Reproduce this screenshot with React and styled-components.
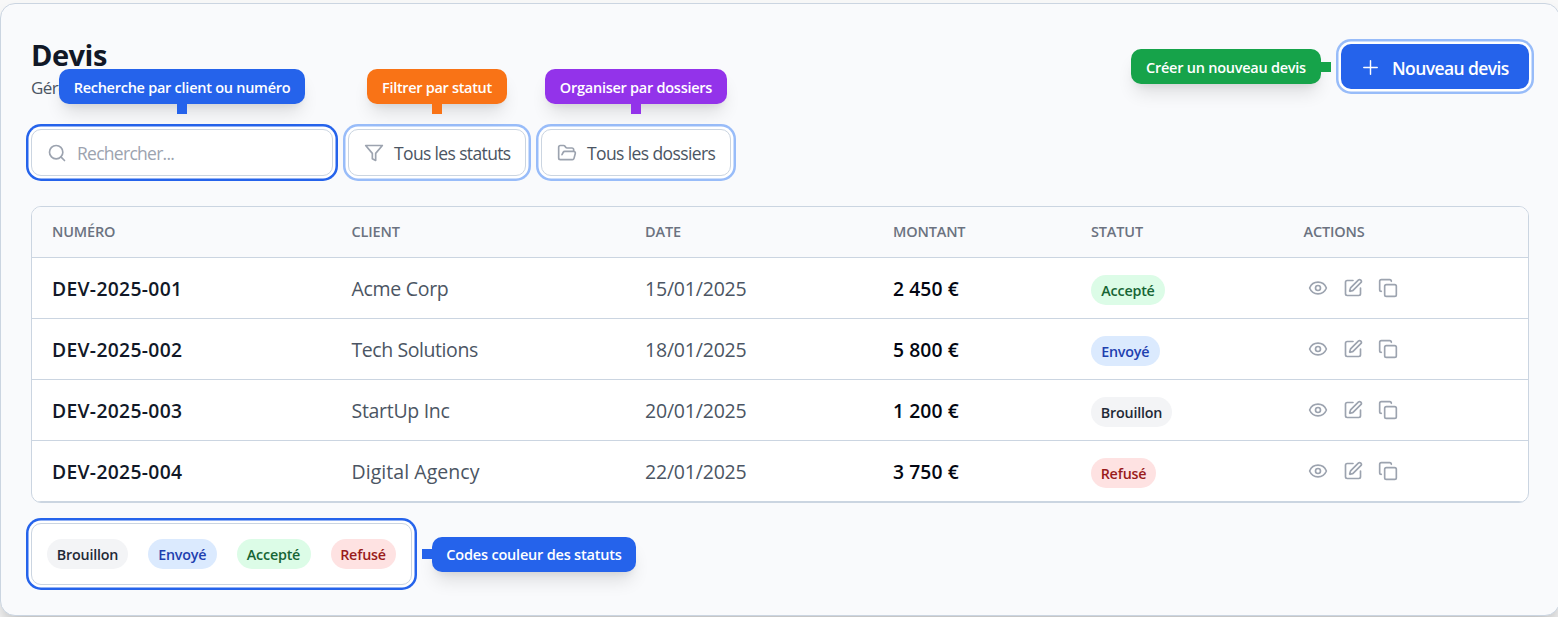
import React from "react";
import styled, { createGlobalStyle, css } from "styled-components";
import { Search, FolderOpen, Plus, Eye, SquarePen, Copy } from "lucide-react";

const statuses = {
    draft: { label: "Brouillon", bg: "#f3f4f6", color: "#1f2937", width: 81 },
    sent: { label: "Envoyé", bg: "#dbeafe", color: "#1e40af", width: 68.5 },
    accepted: { label: "Accepté", bg: "#dcfce7", color: "#166534", width: 74 },
    refused: { label: "Refusé", bg: "#fee2e2", color: "#991b1b", width: 65 },
};

const quotes = [
    { id: "DEV-2025-001", client: "Acme Corp", date: "15/01/2025", amount: "2 450 €", status: "accepted" },
    { id: "DEV-2025-002", client: "Tech Solutions", date: "18/01/2025", amount: "5 800 €", status: "sent", spacing: "-0.42px" },
    { id: "DEV-2025-003", client: "StartUp Inc", date: "20/01/2025", amount: "1 200 €", status: "draft" },
    { id: "DEV-2025-004", client: "Digital Agency", date: "22/01/2025", amount: "3 750 €", status: "refused", spacing: "0.05px" },
];

const columns = ["Numéro", "Client", "Date", "Montant", "Statut", "Actions"];

const FilterIcon = () => (
    <svg
        width="20"
        height="20"
        viewBox="0 0 24 24"
        fill="none"
        stroke="currentColor"
        strokeWidth="2"
        strokeLinecap="round"
        strokeLinejoin="round"
    >
        <polygon points="22 3 2 3 10 12.46 10 19 14 21 14 12.46 22 3" />
    </svg>
);

const StatusBadge = ({ status }) => {
    const { label, bg, color, width } = statuses[status];
    return (
        <Badge $bg={bg} $color={color} $width={width}>
            {label}
        </Badge>
    );
};

const App = () => {
    return (
        <>
            <GlobalStyle />
            <Card>
                <Header>
                    <div>
                        <Title>Devis</Title>
                        <Subtitle>Gérez vos devis</Subtitle>
                    </div>
                    <Anchor>
                        <NewButton>
                            <Plus size={23} strokeWidth={1.5} />
                            <span>Nouveau devis</span>
                        </NewButton>
                        <SideTip $color="#16a34a" $side="left" $width={190} $spacing="-0.25px">
                            Créer un nouveau devis
                        </SideTip>
                    </Anchor>
                </Header>

                <Filters>
                    <Anchor>
                        <Field $width={302} $active $muted $spacing="-0.72px">
                            <Search size={20} />
                            <span>Rechercher...</span>
                        </Field>
                        <TopTip $color="#2563eb" $width={246} $spacing="-0.26px">
                            Recherche par client ou numéro
                        </TopTip>
                    </Anchor>
                    <Anchor>
                        <Field $width={178} $spacing="-0.64px">
                            <FilterIcon />
                            <span>Tous les statuts</span>
                        </Field>
                        <TopTip $color="#f97316" $width={140} $spacing="-0.32px">
                            Filtrer par statut
                        </TopTip>
                    </Anchor>
                    <Anchor>
                        <Field $width={190} $spacing="-0.6px">
                            <FolderOpen size={20} />
                            <span>Tous les dossiers</span>
                        </Field>
                        <TopTip $color="#9333ea" $width={182} $spacing="-0.26px">
                            Organiser par dossiers
                        </TopTip>
                    </Anchor>
                </Filters>

                <Table>
                    <HeadRow>
                        {columns.map((column) => (
                            <div key={column}>{column}</div>
                        ))}
                    </HeadRow>
                    {quotes.map((quote) => (
                        <Row key={quote.id}>
                            <Number>{quote.id}</Number>
                            <Cell $spacing={quote.spacing}>{quote.client}</Cell>
                            <Cell $spacing="-0.2px">{quote.date}</Cell>
                            <Amount>{quote.amount}</Amount>
                            <StatusCell>
                                <StatusBadge status={quote.status} />
                            </StatusCell>
                            <Actions>
                                <Eye size={20} />
                                <SquarePen size={20} />
                                <Copy size={20} />
                            </Actions>
                        </Row>
                    ))}
                </Table>

                <LegendAnchor>
                    <Legend>
                        <StatusBadge status="draft" />
                        <StatusBadge status="sent" />
                        <StatusBadge status="accepted" />
                        <StatusBadge status="refused" />
                    </Legend>
                    <SideTip $color="#2563eb" $side="right" $width={204} $spacing="-0.2px">
                        Codes couleur des statuts
                    </SideTip>
                </LegendAnchor>
            </Card>
        </>
    );
};

export default App;

const GlobalStyle = createGlobalStyle`
    * {
        box-sizing: border-box;
    }
    body {
        margin: 0;
        height: 617px;
        overflow: hidden;
        background: #f8f8f8;
        font-family: "Open Sans", "Noto Sans", sans-serif;
    }
`;

const ring = css`
    box-shadow: 0 0 0 2.5px #fff,
        0 0 0 5px ${({ $active }) => ($active ? "#2563eb" : "#98bcf9")};
`;

const Card = styled.div`
    width: 1560px;
    height: 613px;
    margin-top: 3px;
    padding: 30px;
    border: 1px solid #cbd5e1;
    border-radius: 15px;
    background: #f9fafc;
    box-shadow: 0 12px 18px -4px rgba(0, 0, 0, 0.25);
`;

const Header = styled.div`
    display: flex;
    align-items: center;
    justify-content: space-between;
    height: 65px;
`;

const Title = styled.h1`
    margin: 0;
    padding-top: 2px;
    font-size: 29px;
    line-height: 40px;
    font-weight: 700;
    letter-spacing: -0.5px;
    color: #111827;
`;

const Subtitle = styled.p`
    margin: 0;
    font-size: 17px;
    line-height: 25px;
    letter-spacing: -0.6px;
    color: #4b5563;
`;

const Anchor = styled.div`
    position: relative;
`;

const NewButton = styled.button`
    display: flex;
    align-items: center;
    gap: 10px;
    width: 188px;
    height: 45px;
    padding: 1px 18px 0;
    border: none;
    border-radius: 10px;
    background: #2563eb;
    color: #fff;
    font-family: inherit;
    font-size: 17.5px;
    font-weight: 600;
    letter-spacing: -0.6px;
    white-space: nowrap;
    ${ring}

    svg {
        flex: none;
    }

    span {
        padding-top: 1px;
    }
`;

const Filters = styled.div`
    display: flex;
    gap: 15px;
    margin-top: 30px;
`;

const Field = styled.div`
    display: flex;
    align-items: center;
    gap: 10px;
    width: ${({ $width }) => $width}px;
    height: 47px;
    padding: 0 15px;
    border: 1px solid #cbd5e1;
    border-radius: 10px;
    background: #fff;
    color: ${({ $muted }) => ($muted ? "#9ca3af" : "#4b5563")};
    font-size: 17.5px;
    letter-spacing: ${({ $spacing }) => $spacing};
    white-space: nowrap;
    ${ring}

    svg {
        flex: none;
        color: #9ca3af;
    }

    span {
        padding-top: 1px;
    }
`;

const Tip = styled.div`
    position: absolute;
    z-index: 1;
    display: flex;
    align-items: center;
    justify-content: center;
    width: ${({ $width }) => $width}px;
    height: 35px;
    padding-top: 2px;
    border-radius: 10px;
    background: ${({ $color }) => $color};
    box-shadow: 0 12px 18px -4px rgba(0, 0, 0, 0.12),
        0 5px 8px -5px rgba(0, 0, 0, 0.1);
    color: #fff;
    font-size: 14.5px;
    font-weight: 600;
    letter-spacing: ${({ $spacing }) => $spacing};
    white-space: nowrap;

    &::after {
        content: "";
        position: absolute;
        width: 10px;
        height: 10px;
        background: ${({ $color }) => $color};
    }
`;

const TopTip = styled(Tip)`
    bottom: calc(100% + 25px);
    left: 50%;
    transform: translateX(-50%);

    &::after {
        top: 100%;
        left: calc(50% - 5px);
    }
`;

const SideTip = styled(Tip)`
    top: calc(50% - 17.5px);
    ${({ $side }) => ($side === "left" ? "right" : "left")}: calc(100% + 20px);
    padding-top: 1.5px;

    &::after {
        top: 12.5px;
        ${({ $side }) => ($side === "left" ? "left" : "right")}: 100%;
    }
`;

const Table = styled.div`
    width: 1498px;
    margin-top: 30px;
    border: 1px solid #cbd5e1;
    border-radius: 10px;
    background: #fff;
    overflow: hidden;
`;

const Row = styled.div`
    display: grid;
    grid-template-columns: 299.5px 293.5px 248px 198px 212.5px 244.5px;
    align-items: center;
    height: 61px;
    padding-left: 20px;
    border-bottom: 1px solid #cbd5e1;
`;

const HeadRow = styled(Row)`
    height: 51px;
    padding-bottom: 1px;
    background: #f9fafc;
    color: #6b7280;
    font-size: 14.5px;
    font-weight: 600;
    letter-spacing: -0.15px;
    text-transform: uppercase;
`;

const Cell = styled.div`
    color: #4b5563;
    font-size: 19.5px;
    letter-spacing: ${({ $spacing }) => $spacing || "-0.3px"};
`;

const Number = styled(Cell)`
    color: #111827;
    font-size: 19.3px;
    font-weight: 600;
    letter-spacing: 0.32px;
`;

const Amount = styled(Cell)`
    color: #030712;
    font-size: 19.3px;
    font-weight: 600;
    letter-spacing: 0.1px;
`;

const StatusCell = styled.div`
    display: flex;
    padding-top: 4px;
`;

const Badge = styled.span`
    display: flex;
    align-items: center;
    justify-content: center;
    width: ${({ $width }) => $width}px;
    height: 30px;
    padding-top: 1px;
    border-radius: 15px;
    background: ${({ $bg }) => $bg};
    color: ${({ $color }) => $color};
    font-size: 14.3px;
    font-weight: 600;
    letter-spacing: -0.2px;
`;

const Actions = styled.div`
    display: flex;
    gap: 15px;
    padding-left: 4px;
    color: #9ca3af;
`;

const LegendAnchor = styled(Anchor)`
    width: 381px;
    margin-top: 20px;
`;

const Legend = styled.div`
    display: flex;
    gap: 20px;
    height: 62px;
    padding: 15px;
    border: 1px solid #cbd5e1;
    border-radius: 10px;
    background: #fff;
    box-shadow: 0 0 0 2.5px #fff, 0 0 0 5px #2563eb;
`;
